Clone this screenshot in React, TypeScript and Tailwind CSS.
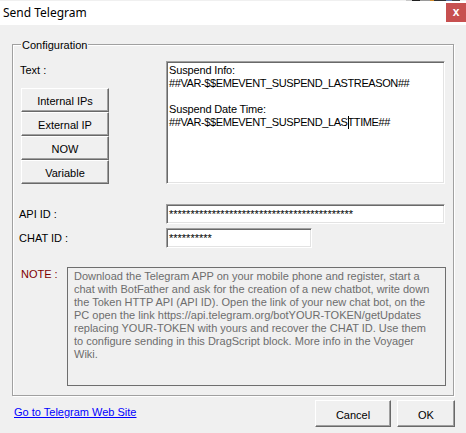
import React from 'react'

const SANS = "font-['Liberation_Sans',Arial,sans-serif]"

// classic raised / sunken win32 borders
const RAISED =
  'bg-[#f0f0f0] border border-t-white border-l-white border-r-[#696969] border-b-[#696969] shadow-[inset_-1px_-1px_0_#a0a0a0]'
const SUNKEN =
  'bg-white border border-t-[#a0a0a0] border-l-[#a0a0a0] border-r-white border-b-white shadow-[inset_1px_1px_0_#696969,inset_-1px_-1px_0_#e3e3e3]'

const INSERT_BUTTONS = ['Internal IPs', 'External IP', 'NOW', 'Variable']

const NOTE_LINES = [
  'Download the Telegram APP on your mobile phone and register, start a',
  'chat with BotFather and ask for the creation of a new chatbot, write down',
  'the Token HTTP API (API ID). Open the link of your new chat bot, on the',
  'PC open the link https://api.telegram.org/botYOUR-TOKEN/getUpdates',
  'replacing YOUR-TOKEN with yours and recover the CHAT ID. Use them',
  'to configure sending in this DragScript block. More info in the Voyager',
  'Wiki.',
]

function TitleBar() {
  return (
    <>
      {/* 1px strip of whatever sits behind the window */}
      <div className="h-px flex bg-[#f0f0f0]">
        <div className="ml-[406px] w-[6px] bg-[#c8c8c8]" />
        <div className="w-[8px] bg-[#202020]" />
        <div className="w-[10px] bg-[#9a9a9a]" />
        <div className="w-[4px] bg-[#d08a2a]" />
        <div className="w-[12px] bg-[#303030]" />
        <div className="w-[6px] bg-[#5a7bb0]" />
        <div className="w-[8px] bg-[#404040]" />
      </div>
      <div className="h-[24px] bg-white flex items-start justify-between">
        <span className="mt-[4px] ml-[3px] font-['Noto_Sans',sans-serif] text-[12px] leading-[16px] text-black">
          Send Telegram
        </span>
        <div className="mt-[2px] w-[20px] h-[19px] bg-[#c75050] flex items-center justify-center">
          <span className={`${SANS} text-white font-bold text-[12px] leading-none -mt-px`}>x</span>
        </div>
      </div>
    </>
  )
}

function SuspendText() {
  // MS Sans Serif caps run narrower than Arial, hence the tighter tracking on the var lines
  return (
    <div className={`${SUNKEN} w-[279px] h-[123px] pl-[2px] pt-[2px] text-black`}>
      <div className="tracking-[-0.15px]">Suspend Info:</div>
      <div className="tracking-[-0.4px]">##VAR-$$EMEVENT_SUSPEND_LASTREASON##</div>
      <div>&nbsp;</div>
      <div className="tracking-[-0.15px]">Suspend Date Time:</div>
      <div className="tracking-[-0.4px]">
        ##VAR-$$EMEVENT_SUSPEND_LAS
        <span className="inline-block w-px h-[13px] -mr-px bg-black align-top" />
        TTIME##
      </div>
    </div>
  )
}

export default function App() {
  return (
    <div className={`${SANS} w-[466px] h-[433px] bg-[#f0f0f0] text-[11px] leading-[13px] flex flex-col overflow-hidden`}>
      <TitleBar />

      <div className="relative mt-[19px] ml-[12px] w-[442px] border border-[#a0a0a0] shadow-[1px_1px_0_white,inset_1px_1px_0_white] pt-[16px] pb-[9px] pl-[6px]">
        <span className="absolute left-[8px] top-[-6px] px-px bg-[#f0f0f0] text-black">Configuration</span>

        <div className="flex">
          <div className="w-[147px] flex flex-col">
            <span className="mt-[3px] pl-px text-black">Text :</span>
            <div className="mt-[11px] ml-[2px] w-[88px] flex flex-col">
              {INSERT_BUTTONS.map((b) => (
                <div key={b} className={`${RAISED} h-[24px] flex items-center justify-center pt-[3px] text-black`}>
                  {b}
                </div>
              ))}
            </div>
          </div>
          <SuspendText />
        </div>

        <div className="mt-[20px] flex items-center">
          <span className="w-[147px] text-black">API ID :</span>
          <div className={`${SUNKEN} w-[279px] h-[20px] pl-[2px] flex items-center text-black`}>
            {'*'.repeat(43)}
          </div>
        </div>

        <div className="mt-[4px] flex items-center">
          <span className="w-[147px] text-black">CHAT ID :</span>
          <div className={`${SUNKEN} w-[146px] h-[20px] pl-[2px] flex items-center text-black`}>
            {'*'.repeat(10)}
          </div>
        </div>

        <div className="mt-[19px] flex items-start">
          <span className="w-[48px] pl-[2px] pt-px text-[#800000]">NOTE :</span>
          <div className="w-[379px] h-[119px] border border-[#6e6e6e] pl-[6px] pt-[2px] text-[#6d6d6d] whitespace-nowrap">
            {NOTE_LINES.map((l) => (
              <div key={l}>{l}</div>
            ))}
          </div>
        </div>
      </div>

      <div className="mt-[4px] flex items-start">
        <a href="#" className="mt-[6px] ml-[14px] text-[#0000ff] underline">
          Go to Telegram Web Site
        </a>
        <div className="ml-auto mr-[11px] flex gap-[6px]">
          <button className={`${RAISED} w-[76px] h-[27px] pt-[3px] text-black`}>Cancel</button>
          <button className={`${RAISED} w-[58px] h-[27px] pt-[3px] text-black`}>OK</button>
        </div>
      </div>
    </div>
  )
}
